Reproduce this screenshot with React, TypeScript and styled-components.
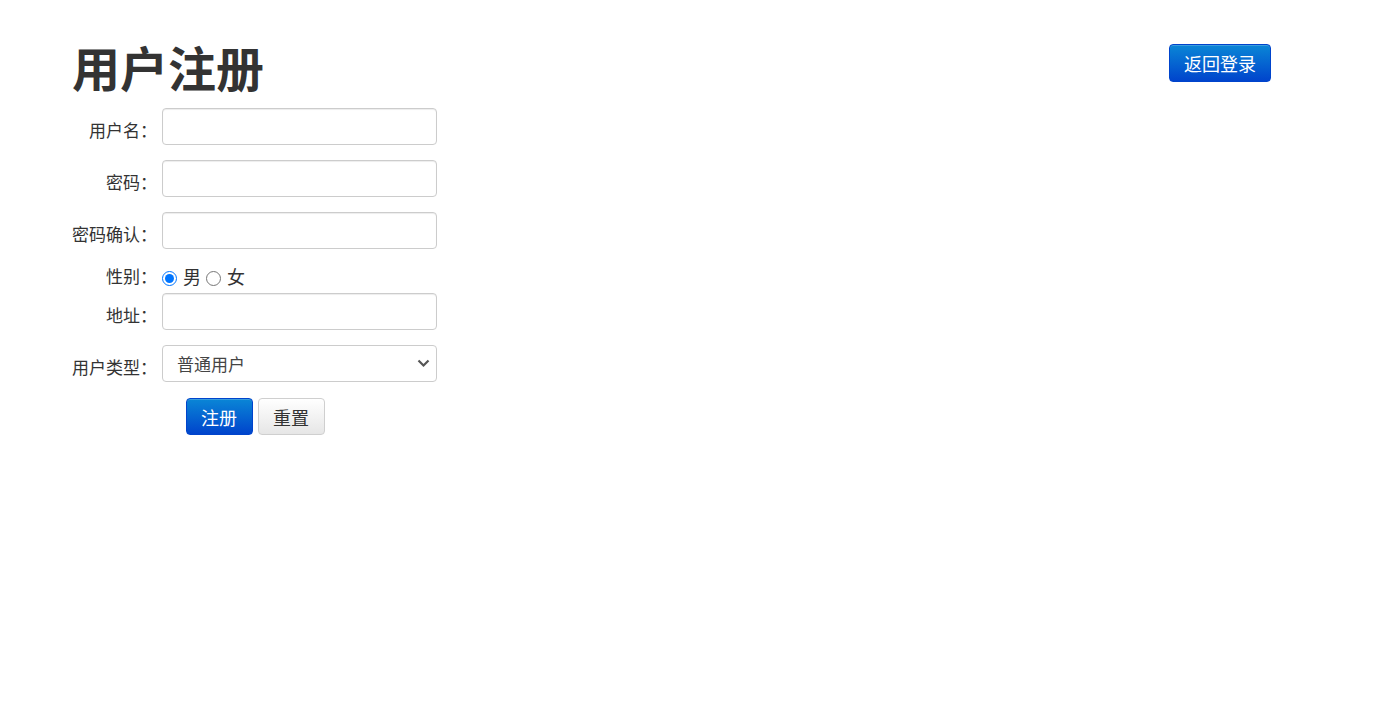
import React from 'react';
import styled, { createGlobalStyle } from 'styled-components';

const GlobalStyle = createGlobalStyle`
  html, body {
    margin: 0;
    padding: 0;
    background: #fff;
  }
  body {
    font-family: "Noto Sans CJK SC", "Noto Sans", "Liberation Sans", sans-serif;
    color: #333;
  }
`;

const Page = styled.div`
  padding: 40px 118px 0 72px;
`;

const Header = styled.div`
  display: flex;
  justify-content: space-between;
  align-items: flex-start;
`;

const Title = styled.h1`
  margin: 0;
  font-size: 48px;
  line-height: 52px;
  font-weight: 700;
  color: #333;
`;

const Button = styled.button<{ primary?: boolean }>`
  font-family: inherit;
  font-size: 18px;
  line-height: 22px;
  height: 37px;
  padding: 0 14.5px;
  border-radius: 4px;
  cursor: pointer;
  border: 1px solid ${p => (p.primary ? '#0044cc' : '#cfcfcf')};
  color: ${p => (p.primary ? '#fff' : '#333')};
  background: ${p =>
    p.primary
      ? 'linear-gradient(to bottom, #0a86d6, #0044cc)'
      : 'linear-gradient(to bottom, #ffffff, #e6e6e6)'};
  box-shadow: inset 0 1px 0 rgba(255, 255, 255, 0.2);
`;

const BackButton = styled(Button)`
  margin-top: 4px;
  height: 38px;
  padding: 0 14px;
`;

const Form = styled.form`
  margin-top: 16px;
  display: inline-flex;
  flex-direction: column;
`;

const Row = styled.div<{ tight?: boolean }>`
  display: flex;
  align-items: flex-start;
  margin-bottom: ${p => (p.tight ? '5px' : '15px')};
`;

const Label = styled.label<{ pad?: number }>`
  width: 85px;
  margin-right: 5px;
  padding-top: ${p => (p.pad ?? 10)}px;
  text-align: right;
  font-size: 17px;
  line-height: 24px;
  color: #333;
  white-space: nowrap;
`;

const Input = styled.input`
  box-sizing: border-box;
  width: 275px;
  height: 37px;
  padding: 4px 12px;
  font-family: inherit;
  font-size: 16px;
  color: #555;
  border: 1px solid #ccc;
  border-radius: 4px;
  box-shadow: inset 0 1px 1px rgba(0, 0, 0, 0.075);
  outline: none;
`;

const SelectWrap = styled.div`
  position: relative;
  width: 275px;
`;

const Select = styled.select`
  box-sizing: border-box;
  width: 275px;
  height: 37px;
  padding: 0 30px 0 14px;
  font-family: inherit;
  font-size: 17px;
  color: #444;
  background: #fff;
  border: 1px solid #ccc;
  border-radius: 4px;
  appearance: none;
  outline: none;
`;

const Chevron = styled.svg`
  position: absolute;
  right: 7px;
  top: 14px;
  width: 13px;
  height: 9px;
  pointer-events: none;
`;

const RadioGroup = styled.div`
  display: flex;
  align-items: center;
  font-size: 18px;
  line-height: 24px;
  color: #333;
`;

const Radio = styled.input`
  width: 15px;
  height: 15px;
  margin: 4px 6px 0 0;
  accent-color: #0075ff;
`;

const RadioText = styled.span`
  margin-right: 5px;
`;

const Actions = styled.div`
  display: flex;
  justify-content: center;
  gap: 5px;
  margin-top: 1px;
  padding-left: 1px;
`;

export default function App() {
  return (
    <>
      <GlobalStyle />
      <Page>
        <Header>
          <Title>用户注册</Title>
          <BackButton primary type="button">返回登录</BackButton>
        </Header>
        <Form onSubmit={e => e.preventDefault()}>
          <Row>
            <Label>用户名：</Label>
            <Input type="text" />
          </Row>
          <Row>
            <Label>密码：</Label>
            <Input type="password" />
          </Row>
          <Row>
            <Label>密码确认：</Label>
            <Input type="password" />
          </Row>
          <Row tight>
            <Label pad={0}>性别：</Label>
            <RadioGroup>
              <Radio type="radio" name="sex" defaultChecked />
              <RadioText>男</RadioText>
              <Radio type="radio" name="sex" />
              <RadioText>女</RadioText>
            </RadioGroup>
          </Row>
          <Row>
            <Label>地址：</Label>
            <Input type="text" />
          </Row>
          <Row>
            <Label>用户类型：</Label>
            <SelectWrap>
              <Select defaultValue="normal">
                <option value="normal">普通用户</option>
                <option value="admin">管理员</option>
              </Select>
              <Chevron viewBox="0 0 13 9">
                <path d="M1.5 1.5 L6.5 6.5 L11.5 1.5" fill="none" stroke="#555" strokeWidth="2.2" />
              </Chevron>
            </SelectWrap>
          </Row>
          <Actions>
            <Button primary type="submit">注册</Button>
            <Button type="reset">重置</Button>
          </Actions>
        </Form>
      </Page>
    </>
  );
}
